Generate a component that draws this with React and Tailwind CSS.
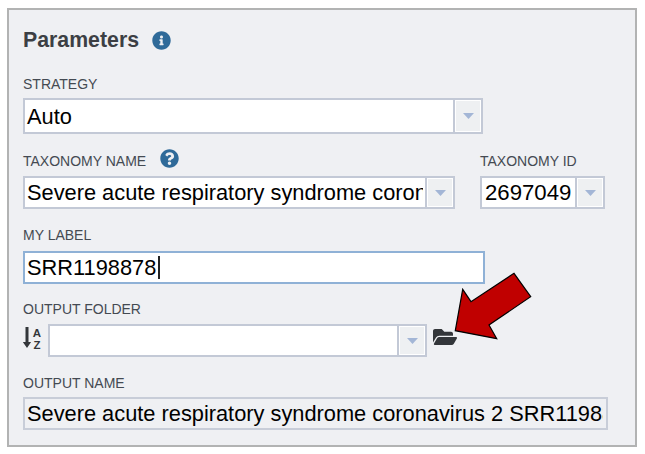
import { FaInfoCircle, FaQuestionCircle, FaFolderOpen } from 'react-icons/fa';

function Label({ children }) {
  return <div className="h-4 text-[14px] leading-4 text-[#444a52] whitespace-nowrap">{children}</div>;
}

function Select({ value, className, fieldClass = 'h-[33px]', textClass = 'leading-[29px] text-[21.8px] pl-[2px]' }) {
  return (
    <div className={`flex border-2 border-[#c3c9d6] bg-white ${fieldClass} ${className}`}>
      <div className={`mr-[2px] min-w-0 flex-1 overflow-hidden whitespace-nowrap text-black ${textClass}`}>{value}</div>
      <div className="flex w-7 shrink-0 items-center justify-center border-l-2 border-[#c3c9d6] bg-[#eef0f2] shadow-[inset_0_0_0_1px_#ffffff]">
        <svg width="11" height="6" viewBox="0 0 11 6"><path d="M0 0h11L5.5 6z" fill="#a3b6d6" /></svg>
      </div>
    </div>
  );
}

function SortAlpha() {
  return (
    <svg className="shrink-0 -translate-y-[3px]" width="20" height="25" viewBox="0 0 20 25">
      <path d="M2.500 2h3v15h2.600L4 23-.1 17h2.600z" fill="#33363a" />
      <text x="14" y="12" textAnchor="middle" fontSize="11.500" fontWeight="700" fill="#33363a">A</text>
      <text x="14" y="23.500" textAnchor="middle" fontSize="11.500" fontWeight="700" fill="#33363a">Z</text>
    </svg>
  );
}

export default function App() {
  return (
    <div className="relative h-[454px] w-[645px] overflow-hidden bg-white pl-[7px] pt-2 font-['Liberation_Sans',Arial,sans-serif]">
      <div className="flex h-[439px] w-[630px] flex-col border-2 border-[#b2b3b3] bg-[#eff0f3] pl-[14px] pt-[18px]">
        <div className="flex h-6 items-center">
          <h2 className="text-[21.3px] font-bold leading-6 text-[#3c3f44]">Parameters</h2>
          <FaInfoCircle className="ml-[13px] text-[#2f6a99]" size={19} />
        </div>

        <div className="mt-6"><Label>STRATEGY</Label></div>
        <Select value="Auto" className="mt-[6px] w-[460px]" fieldClass="h-[36px]" textClass="leading-[34px] text-[21.8px] pl-[2px]" />

        <div className="mt-[17px] flex">
          <div className="w-[432px]">
            <div className="flex items-center">
              <Label>TAXONOMY NAME</Label>
              <FaQuestionCircle className="ml-[14px] -translate-y-[2px] text-[#2f6a99]" size={19} />
            </div>
            <Select value="Severe acute respiratory syndrome coronavirus 2" className="mt-[6px] w-[432px]" />
          </div>
          <div className="ml-[25px] w-[125px]">
            <div className="mt-[2px]"><Label>TAXONOMY ID</Label></div>
            <Select value="2697049" className="mt-[7px]" textClass="leading-[29px] text-[22.2px] pl-[3px]" />
          </div>
        </div>

        <div className="mt-[18px]"><Label>MY LABEL</Label></div>
        <div className="mt-2 flex h-[33px] w-[462px] items-center border-2 border-[#8fb1d6] bg-white pl-[2px] text-[21.8px] leading-[29px] text-black">
          SRR1198878
          <span className="ml-[2px] h-[23px] w-[2px] bg-[#222222]" />
        </div>

        <div className="mt-[17px]"><Label>OUTPUT FOLDER</Label></div>
        <div className="mt-[7px] flex items-center">
          <SortAlpha />
          <Select value="" className="ml-[5px] w-[379px]" />
          <FaFolderOpen className="ml-[6px] -translate-y-[4px] text-[#33363a]" size={24} />
        </div>

        <div className="mt-[18px]"><Label>OUTPUT NAME</Label></div>
        <div className="mt-[6px] h-[33px] w-[585px] border-2 border-[#c8cdd8] bg-[#eff0f3] pl-[2px] pr-[3px] text-[21.8px] leading-[29px] text-black">
          <div className="overflow-hidden whitespace-nowrap">Severe acute respiratory syndrome coronavirus 2 SRR1198878</div>
        </div>
      </div>

      <svg className="absolute left-0 top-0" width="645" height="454" viewBox="0 0 645 454">
        <path d="M455.3 330.7 462.7 289.3 471 301.7 514 273.3 530.7 296.7 489 325 496.7 338.7Z" fill="#c00000" stroke="#000000" strokeWidth="1.2" />
      </svg>
    </div>
  );
}
